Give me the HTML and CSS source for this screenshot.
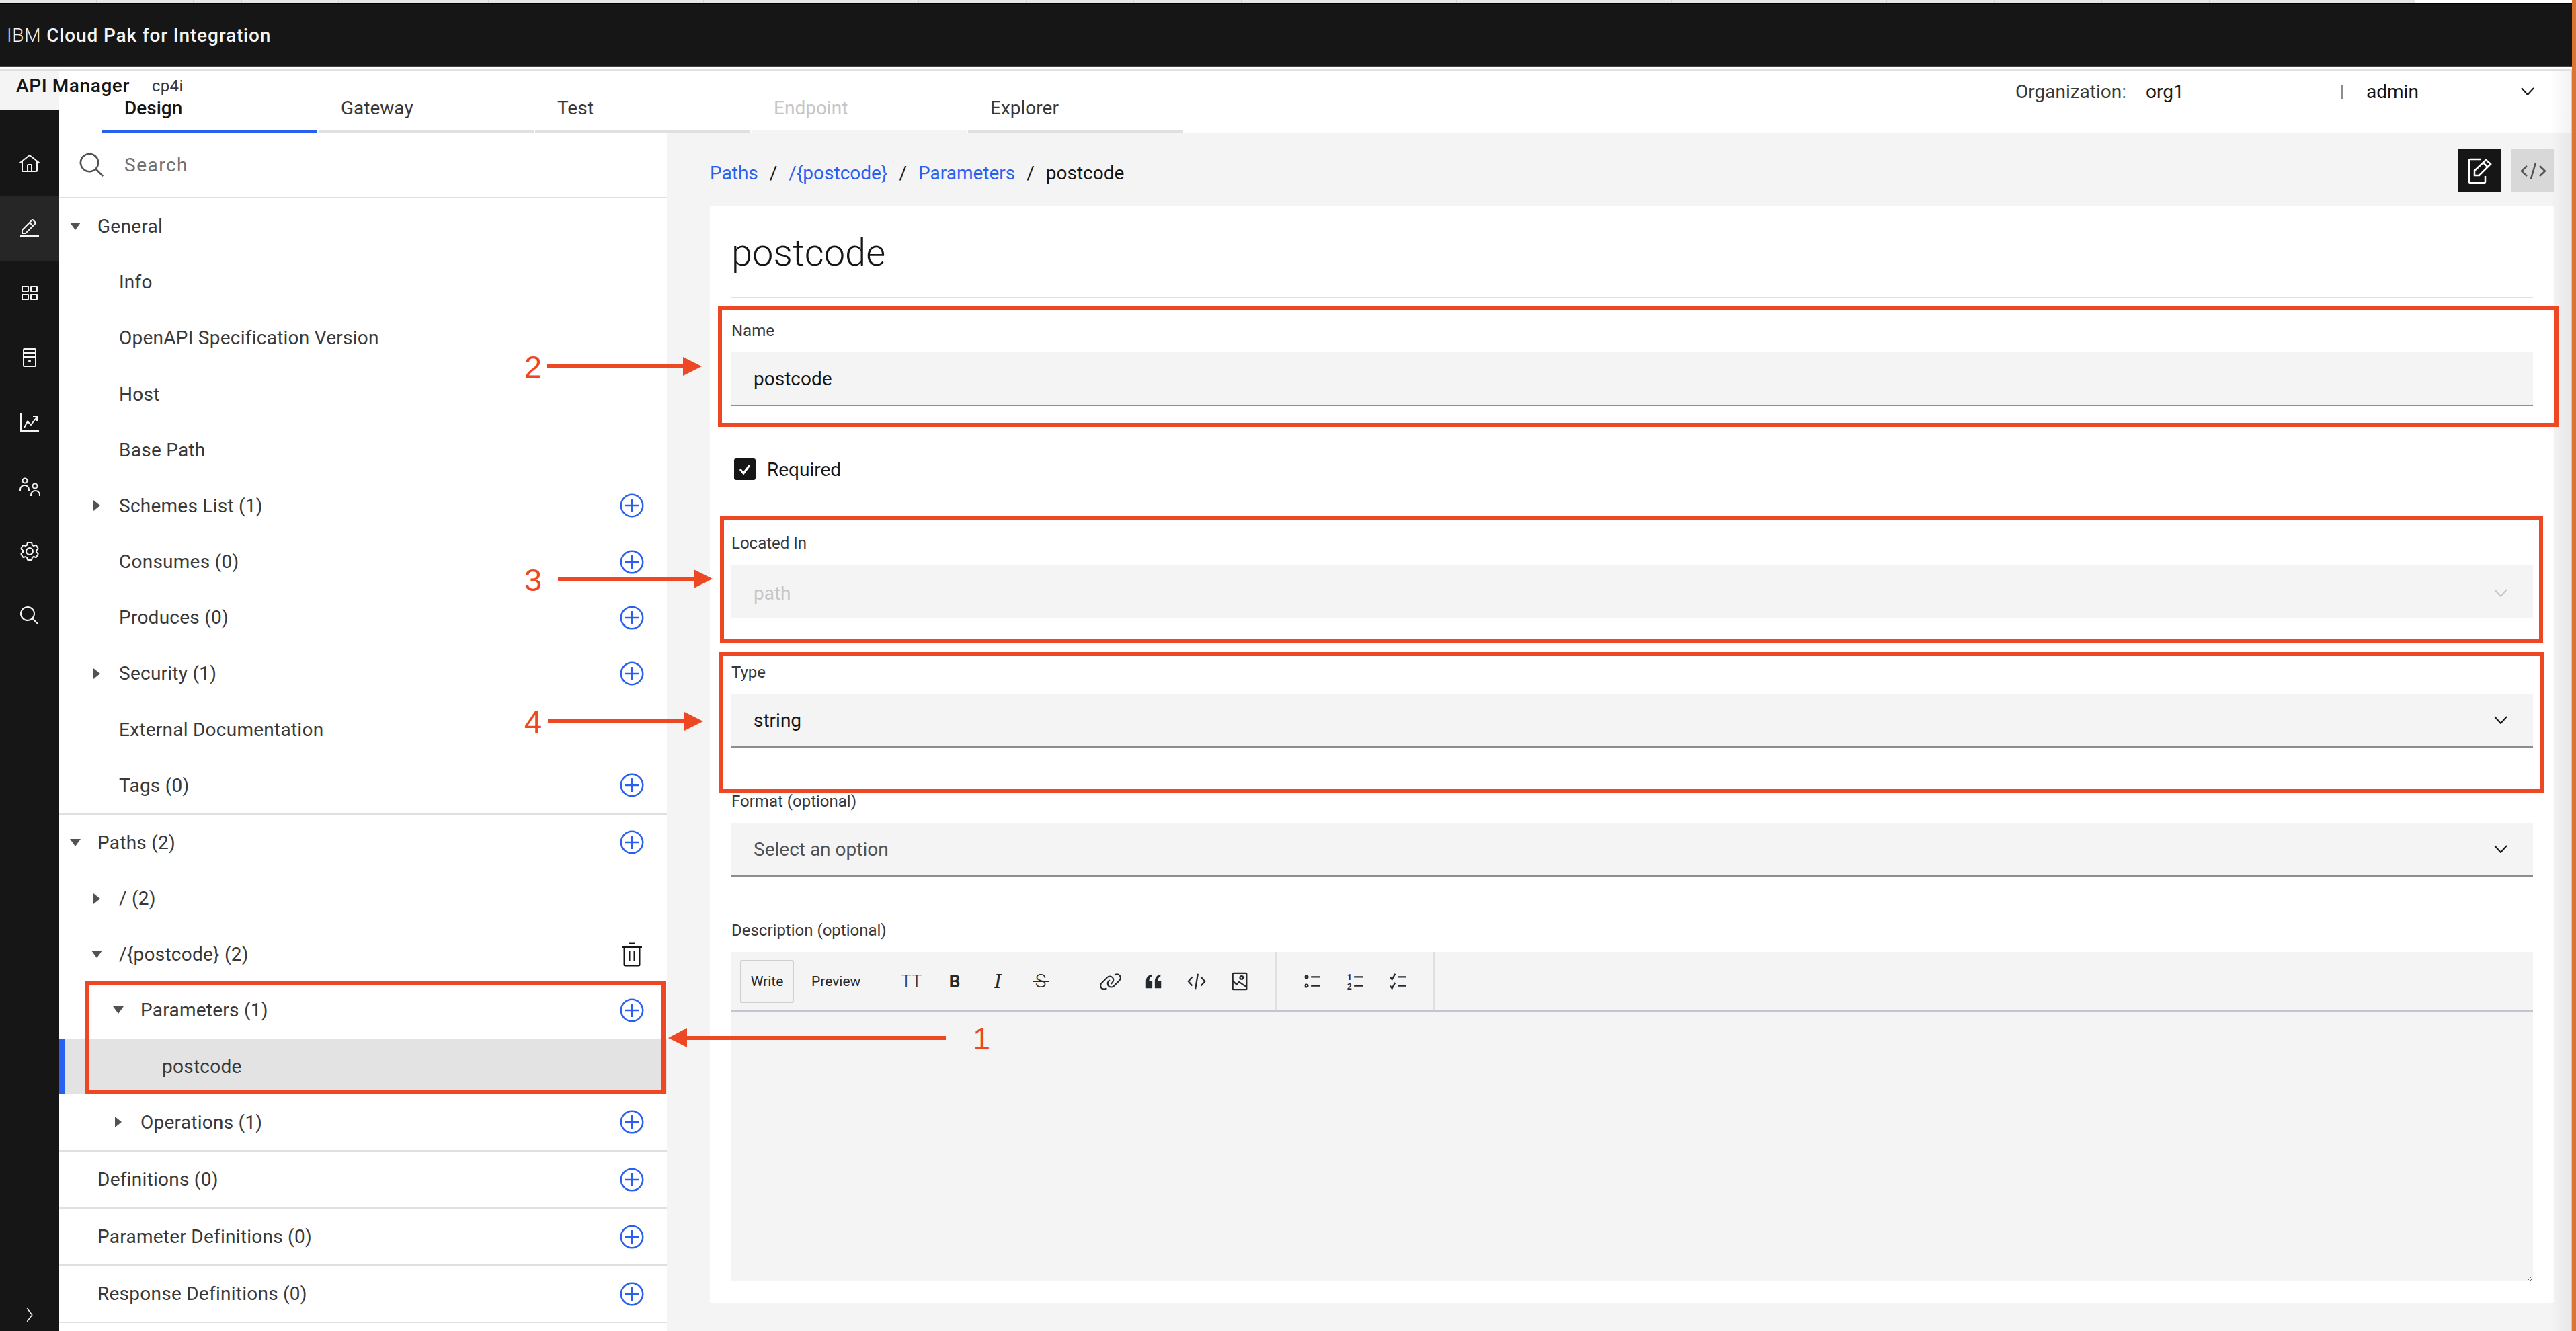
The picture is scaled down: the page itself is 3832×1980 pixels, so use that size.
FILE: index.html
```html
<!DOCTYPE html>
<html lang="en">
  <head>
    <meta charset="UTF-8" />
    <title>API Manager</title>
    <link rel="stylesheet" href="styles.css">
  </head>
  <body>
    <div class="screen">
      <div class="app">
        <div class="browser-tabs"><div class="tabs-narrow"></div><div class="tabs-wide"></div></div>
        <header class="top-bar"><span class="ibm">IBM</span>&nbsp;<strong>Cloud Pak for Integration</strong></header>
        <div class="top-rule"></div>

        <div class="shell">
          <aside class="rail">
            <div class="product"><span class="product-name">API Manager</span><span class="product-org">cp4i</span></div>
            <nav class="rail-nav">
              <a class="rail-item"><svg viewBox="0 0 32 32"><path d="M16.6123,2.2138a1.01,1.01,0,0,0-1.2427,0L1,13.4194l1.2427,1.5717L4,13.6209V26a2.0041,2.0041,0,0,0,2,2H26a2.0037,2.0037,0,0,0,2-2V13.63L29.7573,15,31,13.4282ZM18,26H14V18h4Zm2,0V18a2.0023,2.0023,0,0,0-2-2H14a2.002,2.002,0,0,0-2,2v8H6V12.0615l10-7.79,10,7.8005V26Z"/></svg></a>
              <a class="rail-item rail-active"><svg viewBox="0 0 32 32"><path d="M2 26H30V28H2zM25.4 9c.8-.8.8-2 0-2.8l-3.6-3.6c-.8-.8-2-.8-2.8 0l-15 15V24h6.4L25.4 9zM20.4 4L24 7.6l-3 3L17.4 7 20.4 4zM6 22v-3.6l10-10 3.6 3.6-10 10H6z"/></svg></a>
              <a class="rail-item"><svg viewBox="0 0 32 32" class="line"><rect x="5" y="6" width="9" height="8" rx="1"/><rect x="18" y="6" width="9" height="8" rx="1"/><rect x="5" y="18" width="9" height="8" rx="1"/><rect x="18" y="18" width="9" height="8" rx="1"/></svg></a>
              <a class="rail-item"><svg viewBox="0 0 32 32" class="line"><rect x="7" y="3" width="18" height="26" rx="1"/><path d="M7 9H25M7 15H25"/><circle cx="16" cy="21" r="1"/></svg></a>
              <a class="rail-item"><svg viewBox="0 0 32 32" class="line"><path d="M3 2V29H30M8 24L13 15L18 20L27 8M21 8H27V14"/></svg></a>
              <a class="rail-item"><svg viewBox="0 0 32 32" class="line"><circle cx="9" cy="7" r="3.5"/><path d="M2 22V20A6.5 6 0 0 1 15 20V22"/><circle cx="24" cy="15" r="3.5"/><path d="M18 30V28A6.5 6 0 0 1 31 28V30"/></svg></a>
              <a class="rail-item"><svg viewBox="0 0 32 32"><path d="M27,16.76c0-.25,0-.5,0-.76s0-.51,0-.77l1.92-1.68A2,2,0,0,0,29.3,11L26.94,7a2,2,0,0,0-1.73-1,2,2,0,0,0-.64.1l-2.43.82a11.35,11.35,0,0,0-1.31-.75l-.51-2.52a2,2,0,0,0-2-1.61H13.64a2,2,0,0,0-2,1.61l-.51,2.52a11.48,11.48,0,0,0-1.32.75L7.43,6.06A2,2,0,0,0,6.79,6,2,2,0,0,0,5.06,7L2.7,11a2,2,0,0,0,.41,2.51L5,15.24c0,.25,0,.5,0,.76s0,.51,0,.77L3.11,18.45A2,2,0,0,0,2.7,21L5.06,25a2,2,0,0,0,1.73,1,2,2,0,0,0,.64-.1l2.43-.82a11.35,11.35,0,0,0,1.31.75l.51,2.52a2,2,0,0,0,2,1.61h4.72a2,2,0,0,0,2-1.61l.51-2.52a11.48,11.48,0,0,0,1.32-.75l2.42.82a2,2,0,0,0,.64.1,2,2,0,0,0,1.73-1L29.3,21a2,2,0,0,0-.41-2.51ZM25.21,24l-3.43-1.16a8.86,8.86,0,0,1-2.71,1.57L18.36,28H13.64l-.71-3.55a9.36,9.36,0,0,1-2.7-1.57L6.79,24,4.43,20l2.72-2.4a8.9,8.9,0,0,1,0-3.13L4.43,12,6.79,8l3.43,1.16a8.86,8.86,0,0,1,2.71-1.57L13.64,4h4.72l.71,3.55a9.36,9.36,0,0,1,2.7,1.57L25.21,8,27.57,12l-2.72,2.4a8.9,8.9,0,0,1,0,3.13L27.57,20Z"/><path d="M16,22a6,6,0,1,1,6-6A5.94,5.94,0,0,1,16,22Zm0-10a3.91,3.91,0,0,0-4,4,3.91,3.91,0,0,0,4,4,3.91,3.91,0,0,0,4-4A3.91,3.91,0,0,0,16,12Z"/></svg></a>
              <a class="rail-item"><svg viewBox="0 0 32 32"><path d="M29,27.5859l-7.5521-7.5521a11.0177,11.0177,0,1,0-1.4141,1.4141L27.5859,29ZM4,13a9,9,0,1,1,9,9A9.01,9.01,0,0,1,4,13Z"/></svg></a>
              <a class="rail-expand"><svg viewBox="0 0 32 32" class="line"><path d="M11 3L21 16L11 29"/></svg></a>
            </nav>
          </aside>

          <div class="content">
            <div class="sub-head">
              <div class="tabs">
                <a class="tab tab-active">Design</a>
                <a class="tab">Gateway</a>
                <a class="tab">Test</a>
                <a class="tab tab-disabled">Endpoint</a>
                <a class="tab">Explorer</a>
              </div>
              <div class="account">
                <span class="org-label">Organization:</span>
                <span class="org-name">org1</span>
                <span class="account-sep"></span>
                <span class="user-name">admin</span>
                <svg class="chevron" viewBox="0 0 20 12"><path d="M1 1L10 11L19 1"/></svg>
              </div>
            </div>

            <div class="workspace">
              <section class="tree">
                <div class="tree-search">
                  <svg viewBox="0 0 32 32"><path d="M29,27.5859l-7.5521-7.5521a11.0177,11.0177,0,1,0-1.4141,1.4141L27.5859,29ZM4,13a9,9,0,1,1,9,9A9.01,9.01,0,0,1,4,13Z"/></svg>
                  <span>Search</span>
                </div>

                <div class="tree-group">
                  <div class="tree-row"><i class="caret caret-down"></i>General</div>
                  <div class="tree-row lvl-2"><i class="caret"></i>Info</div>
                  <div class="tree-row lvl-2"><i class="caret"></i>OpenAPI Specification Version</div>
                  <div class="tree-row lvl-2"><i class="caret"></i>Host</div>
                  <div class="tree-row lvl-2"><i class="caret"></i>Base Path</div>
                  <div class="tree-row lvl-2"><i class="caret caret-right"></i>Schemes List (1)<svg class="add" viewBox="0 0 32 32"><use href="#add-icon"/></svg></div>
                  <div class="tree-row lvl-2"><i class="caret"></i>Consumes (0)<svg class="add" viewBox="0 0 32 32"><use href="#add-icon"/></svg></div>
                  <div class="tree-row lvl-2"><i class="caret"></i>Produces (0)<svg class="add" viewBox="0 0 32 32"><use href="#add-icon"/></svg></div>
                  <div class="tree-row lvl-2"><i class="caret caret-right"></i>Security (1)<svg class="add" viewBox="0 0 32 32"><use href="#add-icon"/></svg></div>
                  <div class="tree-row lvl-2"><i class="caret"></i>External Documentation</div>
                  <div class="tree-row lvl-2"><i class="caret"></i>Tags (0)<svg class="add" viewBox="0 0 32 32"><use href="#add-icon"/></svg></div>
                </div>

                <div class="tree-group">
                  <div class="tree-row"><i class="caret caret-down"></i>Paths (2)<svg class="add" viewBox="0 0 32 32"><use href="#add-icon"/></svg></div>
                  <div class="tree-row lvl-2"><i class="caret caret-right"></i>/ (2)</div>
                  <div class="tree-row lvl-2"><i class="caret caret-down"></i>/{postcode} (2)<svg class="add trash" viewBox="0 0 32 32"><path d="M12 12H14V24H12zM18 12H20V24H18z"/><path d="M4 6V8H6V28a2 2 0 002 2H24a2 2 0 002-2V8h2V6zM8 28V8H24V28zM12 2H20V4H12z"/></svg></div>
                  <div class="tree-row lvl-3"><i class="caret caret-down"></i>Parameters (1)<svg class="add" viewBox="0 0 32 32"><use href="#add-icon"/></svg></div>
                  <div class="tree-row lvl-4 tree-selected"><i class="caret"></i>postcode</div>
                  <div class="tree-row lvl-3"><i class="caret caret-right"></i>Operations (1)<svg class="add" viewBox="0 0 32 32"><use href="#add-icon"/></svg></div>
                </div>

                <div class="tree-group"><div class="tree-row"><i class="caret"></i>Definitions (0)<svg class="add" viewBox="0 0 32 32"><use href="#add-icon"/></svg></div></div>
                <div class="tree-group"><div class="tree-row"><i class="caret"></i>Parameter Definitions (0)<svg class="add" viewBox="0 0 32 32"><use href="#add-icon"/></svg></div></div>
                <div class="tree-group"><div class="tree-row"><i class="caret"></i>Response Definitions (0)<svg class="add" viewBox="0 0 32 32"><use href="#add-icon"/></svg></div></div>
              </section>

              <main class="main">
                <div class="crumb-bar">
                  <div class="crumbs">
                    <a>Paths</a><span class="slash">/</span><a>/{postcode}</a><span class="slash">/</span><a>Parameters</a><span class="slash">/</span><span class="crumb-now">postcode</span>
                  </div>
                  <div class="view-buttons">
                    <button class="view-btn view-btn-on"><svg viewBox="0 0 64 64" class="btn-line"><path d="M34 15H19a2 2 0 00-2 2V48a2 2 0 002 2H39a2 2 0 002-2V40"/><path d="M25 32L42 16L49 22L32 39H25ZM38 20L45 27"/></svg></button>
                    <button class="view-btn"><svg viewBox="0 0 64 64" class="btn-line"><path d="M23 25L15 32.5L23 40M42 25L50 32.5L42 40M36 20L29 44"/></svg></button>
                  </div>
                </div>

                <div class="card">
                  <h1 class="card-title">postcode</h1>

                  <div class="field field-first">
                    <label class="field-label">Name</label>
                    <input class="text-input" type="text" value="postcode" />
                  </div>

                  <div class="check-row">
                    <span class="check-box"><svg viewBox="0 0 32 32"><path d="M9 16L14 22L23 10"/></svg></span>
                    <span>Required</span>
                  </div>

                  <div class="field field-after-check">
                    <label class="field-label">Located In</label>
                    <div class="select select-disabled"><span>path</span><svg class="chevron" viewBox="0 0 20 12"><path d="M1 1L10 11L19 1"/></svg></div>
                  </div>

                  <div class="field">
                    <label class="field-label">Type</label>
                    <div class="select"><span>string</span><svg class="chevron" viewBox="0 0 20 12"><path d="M1 1L10 11L19 1"/></svg></div>
                  </div>

                  <div class="field">
                    <label class="field-label">Format (optional)</label>
                    <div class="select select-empty"><span>Select an option</span><svg class="chevron" viewBox="0 0 20 12"><path d="M1 1L10 11L19 1"/></svg></div>
                  </div>

                  <div class="field">
                    <label class="field-label">Description (optional)</label>
                    <div class="editor">
                      <div class="editor-bar">
                        <button class="md-tab md-tab-on">Write</button>
                        <button class="md-tab md-preview">Preview</button>
                        <div class="md-group">
                          <span class="md-btn md-tt">TT</span>
                          <span class="md-btn md-b">B</span>
                          <span class="md-btn md-i">I</span>
                          <span class="md-btn md-s">S</span>
                        </div>
                        <div class="md-group md-group-gap">
                          <span class="md-btn"><svg viewBox="0 0 32 32" class="md-link"><path d="M29.25,6.76a6,6,0,0,0-8.5,0l1.42,1.42a4,4,0,1,1,5.67,5.67l-8,8a4,4,0,1,1-5.67-5.66l1.41-1.42-1.41-1.42-1.42,1.42a6,6,0,0,0,0,8.5A6,6,0,0,0,17,25a6,6,0,0,0,4.27-1.76l8-8A6,6,0,0,0,29.25,6.76Z"/><path d="M4.19,24.82a4,4,0,0,1,0-5.67l8-8a4,4,0,0,1,5.67,0A3.94,3.94,0,0,1,19,14a4,4,0,0,1-1.17,2.85L15.71,19l1.42,1.42,2.12-2.12a6,6,0,0,0-8.51-8.51l-8,8a6,6,0,0,0,0,8.51A6,6,0,0,0,7,28a6.07,6.07,0,0,0,4.28-1.76L9.86,24.82A4,4,0,0,1,4.19,24.82Z"/></svg></span>
                          <span class="md-btn"><svg viewBox="0 0 32 32"><path d="M5 27a1 1 0 01-1-1V16C4 10 7 6 13 5V8C10 9 9 12 9 15H13a1 1 0 011 1V26a1 1 0 01-1 1zM19 27a1 1 0 01-1-1V16C18 10 21 6 27 5V8C24 9 23 12 23 15H27a1 1 0 011 1V26a1 1 0 01-1 1z"/></svg></span>
                          <span class="md-btn"><svg viewBox="0 0 32 32" class="md-line"><path d="M9 9L3 16L9 23M23 9L29 16L23 23M18 4L14 28"/></svg></span>
                          <span class="md-btn"><svg viewBox="0 0 32 32" class="md-line"><rect x="5" y="3" width="22" height="26" rx="1"/><circle cx="19" cy="10" r="2.5"/><path d="M5 15L11 21L15 17L27 25"/></svg></span>
                        </div>
                        <div class="md-divider"></div>
                        <div class="md-group">
                          <span class="md-btn"><svg viewBox="0 0 32 32" class="md-line"><circle cx="7" cy="9" r="2" fill="#24292e"/><circle cx="7" cy="23" r="2" fill="#24292e"/><path d="M14 9H28M14 23H28"/></svg></span>
                          <span class="md-btn"><svg viewBox="0 0 32 32" class="md-line"><text x="3" y="14" class="md-num">1</text><text x="3" y="29" class="md-num">2</text><path d="M14 9H28M14 23H28"/></svg></span>
                          <span class="md-btn"><svg viewBox="0 0 32 32" class="md-line"><path d="M3 9L6 13L11 4M3 23L6 27L11 18M15 9H28M15 23H28"/></svg></span>
                        </div>
                        <div class="md-divider"></div>
                      </div>
                      <textarea class="editor-text"></textarea>
                    </div>
                  </div>
                </div>
              </main>
            </div>
          </div>
        </div>
      </div>
      <div class="edge"></div>

      <!-- numbered callouts drawn over the screen -->
      <svg class="callouts" viewBox="0 0 3832 1980">
        <rect class="call-box" x="129" y="1462" width="858" height="163"/>
        <rect class="call-box" x="1071" y="458" width="2732" height="174"/>
        <rect class="call-box" x="1074" y="770" width="2706" height="184"/>
        <rect class="call-box" x="1073" y="973" width="2708" height="203"/>

        <rect class="call-fill" x="1018" y="1541" width="389" height="6"/>
        <polygon class="call-fill" points="994,1544 1022,1529 1022,1558"/>
        <text class="call-num" x="1447" y="1561">1</text>

        <rect class="call-fill" x="814" y="542" width="205" height="6"/>
        <polygon class="call-fill" points="1044,545 1016,531 1016,559"/>
        <text class="call-num" x="780" y="562">2</text>

        <rect class="call-fill" x="830" y="858" width="205" height="6"/>
        <polygon class="call-fill" points="1060,861 1032,847 1032,875"/>
        <text class="call-num" x="780" y="879">3</text>

        <rect class="call-fill" x="815" y="1070" width="205" height="6"/>
        <polygon class="call-fill" points="1046,1073 1018,1059 1018,1087"/>
        <text class="call-num" x="780" y="1090">4</text>
      </svg>

      <svg class="defs"><defs><g id="add-icon"><path d="M16,4c6.6,0,12,5.4,12,12s-5.4,12-12,12S4,22.6,4,16S9.4,4,16,4 M16,2C8.3,2,2,8.3,2,16s6.3,14,14,14s14-6.3,14-14S23.7,2,16,2z"/><path d="M24 15 17 15 17 8 15 8 15 15 8 15 8 17 15 17 15 24 17 24 17 17 24 17z"/></g></defs></svg>
    </div>
  </body>
</html>
```

FILE: styles.css
```css
* { box-sizing: border-box; }
html, body { margin: 0; padding: 0; }
body { font-family: Roboto, "Noto Sans", sans-serif; font-size: 28px; color: #393939; background: #fff; }
a { color: inherit; text-decoration: none; }
svg { display: block; }
svg.line, svg.line * { fill: none; stroke: currentColor; stroke-width: 2; }

.screen { position: relative; display: flex; width: 3832px; height: 1980px; overflow: hidden; }
.app { flex: 1; min-width: 0; display: flex; flex-direction: column; }
.edge { position: relative; width: 6px; background: #da7634; }
.edge::before { content: ""; position: absolute; top: 105px; bottom: 0; right: 6px; width: 32px; background: linear-gradient(90deg, rgba(0,0,0,0), rgba(0,0,0,.05)); border-right: 1px solid #c8c8c8; }
.defs { width: 0; height: 0; position: absolute; }

/* strip of browser tabs cut off at the very top */
.browser-tabs { display: flex; height: 4px; flex: none; background: #fff; }
.tabs-narrow { width: 567px; background: repeating-linear-gradient(90deg, #e6e6e6 0 71px, #d4d4d4 71px 72px); }
.tabs-wide { width: 3026px; background: repeating-linear-gradient(90deg, #e6e6e6 0 159px, #d4d4d4 159px 160px); }

.top-bar { height: 96px; flex: none; display: flex; align-items: center; padding-left: 10px; color: #f4f4f4; background: #161616; border-top: 2px solid #000; border-bottom: 2px solid #444; white-space: pre; letter-spacing: .85px; }
.top-bar .ibm { font-weight: 300; }
.top-bar strong { font-weight: 500; }
.top-rule { height: 5px; flex: none; background: #fff; border-bottom: 2px solid #e0e0e0; }

.shell { flex: 1; min-height: 0; display: flex; }

/* left rail */
.rail { width: 88px; flex: none; display: flex; flex-direction: column; }
.product { position: relative; z-index: 2; height: 59px; flex: none; display: flex; align-items: center; padding: 0 0 14px 24px; background: #f4f4f4; white-space: nowrap; }
.product-name { font-weight: 500; color: #161616; letter-spacing: .6px; }
.product-org { margin-left: 33px; font-size: 24px; color: #393939; letter-spacing: .3px; }
.rail-nav { flex: 1; display: flex; flex-direction: column; padding-top: 32px; background: #161616; color: #f4f4f4; }
.rail-item { height: 96px; display: flex; align-items: center; justify-content: center; flex: none; }
.rail-item svg { width: 32px; height: 32px; fill: currentColor; }
.rail-active { background: #262626; }
.rail-expand { margin-top: auto; height: 48px; margin-bottom: 0; display: flex; align-items: center; justify-content: center; }
.rail-expand svg { width: 24px; height: 24px; }

.content { flex: 1; min-width: 0; display: flex; flex-direction: column; }

/* tabs + account line */
.sub-head { height: 93px; flex: none; display: flex; justify-content: space-between; }
.tabs { display: flex; gap: 2px; padding: 40px 0 0 64px; }
.tab { width: 320px; height: 53px; padding-left: 33px; line-height: 32px; border-bottom: 4px solid #e0e0e0; color: #393939; }
.tab-active { font-weight: 500; color: #161616; border-bottom-color: #2a60f0; }
.tab-disabled { color: #c6c6c6; border-bottom-color: #f4f4f4; }
.account { display: flex; align-items: center; height: 62px; padding-right: 56px; color: #161616; }
.org-label { width: 194px; color: #393939; }
.org-name { width: 291px; }
.account-sep { width: 37px; height: 21px; border-left: 2px solid #8d8d8d; }
.user-name { width: 230px; }
.chevron { width: 20px; height: 12px; fill: none; stroke: #161616; stroke-width: 2; }

.workspace { flex: 1; min-height: 0; display: flex; }

/* tree */
.tree { width: 904px; flex: none; background: #fff; letter-spacing: .25px; }
.tree-search { height: 97px; display: flex; align-items: center; padding-left: 28px; color: #6f6f6f; border-bottom: 2px solid #e0e0e0; letter-spacing: 1.5px; }
.tree-search svg { width: 42px; height: 42px; fill: #525252; margin-right: 27px; }
.tree-group { border-bottom: 2px solid #e0e0e0; }
.tree-row { height: 83.18px; display: flex; align-items: center; padding-right: 32px; }
.lvl-2 { padding-left: 32px; }
.lvl-3 { padding-left: 64px; }
.lvl-4 { padding-left: 96px; }
.caret { width: 57px; flex: none; padding-right: 9px; display: flex; justify-content: center; }
.caret-down::before { content: ""; border-left: 8px solid transparent; border-right: 8px solid transparent; border-top: 11px solid #525252; }
.caret-right::before { content: ""; border-top: 8px solid transparent; border-bottom: 8px solid transparent; border-left: 10px solid #525252; }
.add { width: 40px; height: 40px; margin-left: auto; fill: #2a60f0; }
.trash { fill: #161616; }
.tree-selected { background: #e3e3e3; border-left: 8px solid #2a60f0; padding-left: 88px; }

/* right side */
.main { flex: 1; min-width: 0; padding: 24px 26px 0 64px; background: #f4f4f4; }
.crumb-bar { display: flex; justify-content: space-between; align-items: center; margin-bottom: 20px; }
.crumbs { display: flex; padding-top: 6px; color: #2a60f0; }
.slash { margin: 0 17px; color: #161616; }
.crumb-now { color: #161616; }
.view-buttons { display: flex; gap: 16px; }
.view-btn { width: 64px; height: 64px; padding: 0; border: 0; background: #d8d8d8; color: #525252; }
.btn-line { width: 64px; height: 64px; fill: none; stroke: currentColor; stroke-width: 2.5; }
.view-btn-on { background: #161616; color: #fff; }

.card { padding: 0 32px 32px; background: #fff; }
.card-title { margin: 0; padding: 42px 0 38px; font-size: 56px; line-height: 56px; font-weight: 300; color: #161616; border-bottom: 2px solid #e0e0e0; }
.field { margin-top: 64px; }
.field-first { margin-top: 32px; }
.field-after-check { margin-top: 78px; }
.field-label { display: block; height: 32px; margin-bottom: 16px; font-size: 24px; line-height: 32px; color: #393939; }
.text-input { display: block; width: 100%; height: 80px; padding: 0 33px; border: 0; border-bottom: 2px solid #8d8d8d; background: #f4f4f4; font: inherit; color: #161616; outline: none; }
.check-row { display: flex; align-items: center; gap: 17px; margin: 78px 0 0 4px; height: 32px; color: #161616; }
.check-box { width: 32px; height: 32px; border-radius: 3px; background: #161616; }
.check-box svg { fill: none; stroke: #fff; stroke-width: 3; }
.select { height: 80px; display: flex; align-items: center; justify-content: space-between; padding: 0 38px 0 33px; background: #f4f4f4; border-bottom: 2px solid #8d8d8d; color: #161616; }
.select-disabled { border-bottom: 0; padding-top: 4px; color: #c6c6c6; }
.select-disabled .chevron { stroke: #c6c6c6; }
.select-empty { color: #525252; }

/* markdown editor */
.editor { background: #f4f4f4; }
.editor-bar { height: 89px; display: flex; align-items: center; padding-left: 13px; border-bottom: 2px solid #c1c7cd; color: #24292e; }
.md-tab { height: 64px; padding: 0; border: 2px solid transparent; border-radius: 3px; background: transparent; font: inherit; font-size: 21px; color: #24292e; }
.md-tab-on { width: 80px; border-color: #d0d0d0; }
.md-preview { width: 143px; text-align: left; padding-left: 24px; }
.md-group { display: flex; }
.md-group-gap { margin-left: 40px; }
.md-btn { position: relative; width: 64px; height: 64px; display: flex; align-items: center; justify-content: center; font-size: 26px; }
.md-btn svg { width: 30px; height: 30px; fill: #24292e; }
.md-btn .md-link { width: 34px; height: 34px; }
.md-line, .md-line * { fill: none; stroke: #24292e; stroke-width: 2.4; }
.md-num { font-size: 13px; font-weight: 700; fill: #24292e; stroke: none; }
.md-tt { font-weight: 300; }
.md-b { font-weight: 700; }
.md-i { font-family: "Liberation Serif", serif; font-style: italic; font-size: 32px; }
.md-s { font-weight: 300; font-size: 28px; }
.md-s::after { content: ""; position: absolute; left: 20px; right: 20px; top: 31px; height: 2px; background: #24292e; }
.md-divider { align-self: stretch; width: 2px; margin: 0 21px; background: #e0e0e0; }
.md-divider:last-child { margin-left: 20px; }
.editor-text { display: block; width: 100%; height: 401px; padding: 16px; border: 0; background: #f4f4f4; resize: both; font: inherit; outline: none; }

/* annotations */
.callouts { position: absolute; left: 0; top: 0; width: 3832px; height: 1980px; pointer-events: none; }
.call-box { fill: none; stroke: #ee4723; stroke-width: 6; }
.call-fill { fill: #ee4723; }
.call-num { font-family: "Liberation Sans", sans-serif; font-size: 47px; fill: #ee4723; }
```
